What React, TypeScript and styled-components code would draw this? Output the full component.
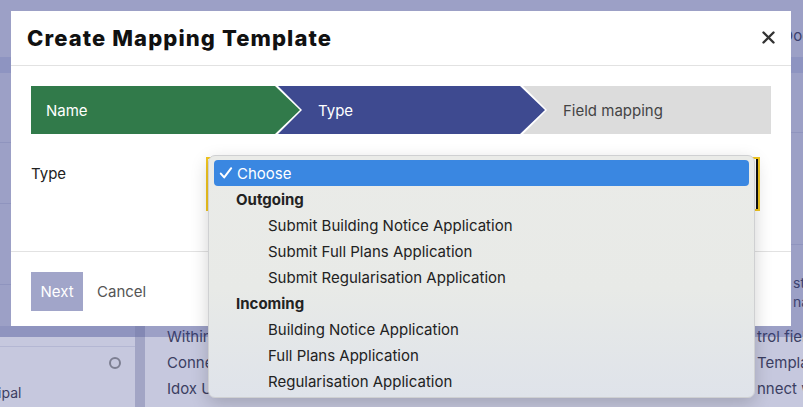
import React from 'react';
import styled, { createGlobalStyle } from 'styled-components';

const GlobalStyle = createGlobalStyle`
  html, body {
    margin: 0;
    padding: 0;
  }
  body {
    font-family: 'Inter', 'Liberation Sans', sans-serif;
    color: #222;
  }
  * {
    box-sizing: border-box;
  }
`;

type Tone = 'done' | 'current' | 'todo';

const steps: { id: string; label: string; tone: Tone; width?: number }[] = [
  { id: 'name', label: 'Name', tone: 'done', width: 269 },
  { id: 'type', label: 'Type', tone: 'current', width: 267 },
  { id: 'fields', label: 'Field mapping', tone: 'todo' },
];

const outgoing = [
  'Submit Building Notice Application',
  'Submit Full Plans Application',
  'Submit Regularisation Application',
];
const incoming = [
  'Building Notice Application',
  'Full Plans Application',
  'Regularisation Application',
];

const App: React.FC = () => (
  <Page>
    <GlobalStyle />
    {/* the app behind the modal */}
    <Shell>
      <TopNav>
        <NavLeft>Settings</NavLeft>
        <NavRight>Documents</NavRight>
      </TopNav>
      <SubBar />
      <Columns>
        <SideCol>
          <SideRow $h={70} />
          <SideRow $h={61} />
          <SideRow $h={81} />
          <SideText>
            <span>Description</span>
            <span>Classific…</span>
          </SideText>
          <Band />
          <SideRow $h={10} />
          <SideItem>
            <span>Principal</span>
            <Ring />
          </SideItem>
        </SideCol>
        <Gutter />
        <MainCol>
          <MainRow $h={60} />
          <MainRow $h={112} />
          <Para>
            <ParaLine>
              <span>Choose a template</span>
              <span>steps</span>
            </ParaLine>
            <ParaLine>
              <span>Give it a name</span>
              <span>name</span>
            </ParaLine>
          </Para>
          <BandList>
            <ListLine>
              <span>Within the</span>
              <span>trol fields</span>
            </ListLine>
            <ListLine>
              <span>Connect each</span>
              <span>Templates</span>
            </ListLine>
            <ListLine>
              <span>Idox Uniform</span>
              <span>nnect with</span>
            </ListLine>
          </BandList>
        </MainCol>
      </Columns>
    </Shell>

    <Overlay />

    <Modal>
      <ModalHeader>
        <Title>Create Mapping Template</Title>
        <CloseButton aria-label="Close">
          <svg width="13" height="13" viewBox="0 0 13 13">
            <path d="M1.5 1.5 L11.5 11.5 M11.5 1.5 L1.5 11.5" stroke="#333" strokeWidth="2.4" strokeLinecap="round" />
          </svg>
        </CloseButton>
      </ModalHeader>
      <ModalBody>
        <Stepper>
          {steps.map((s, i) => (
            <Step
              key={s.id}
              $tone={s.tone}
              $first={i === 0}
              $last={i === steps.length - 1}
              style={s.width ? { flex: `0 0 ${s.width}px` } : undefined}
            >
              {s.label}
            </Step>
          ))}
        </Stepper>
        <FieldRow>
          <FieldLabel>Type</FieldLabel>
          <SelectBox />
        </FieldRow>
      </ModalBody>
      <ModalFooter>
        <PrimaryButton>Next</PrimaryButton>
        <LinkButton>Cancel</LinkButton>
      </ModalFooter>
    </Modal>

    <Menu>
      <Option $active>
        <Check width="14" height="14" viewBox="0 0 14 14">
          <path d="M1.8 7.6 L5.2 11.4 L12.2 2.2" fill="none" stroke="#fff" strokeWidth="2" strokeLinecap="round" strokeLinejoin="round" />
        </Check>
        Choose
      </Option>
      <Group>Outgoing</Group>
      {outgoing.map((o) => (
        <Option key={o} $indent>
          {o}
        </Option>
      ))}
      <Group>Incoming</Group>
      {incoming.map((o) => (
        <Option key={o} $indent>
          {o}
        </Option>
      ))}
    </Menu>
  </Page>
);

export default App;

const Page = styled.div`
  position: relative;
  width: 803px;
  height: 407px;
  overflow: hidden;
  background: #c6c8de;
`;

const Shell = styled.div`
  display: flex;
  flex-direction: column;
  height: 100%;
  color: #3b3e62;
  font-size: 15px;
`;

const TopNav = styled.div`
  height: 57px;
  display: flex;
  align-items: center;
  padding-top: 14px;
`;

const NavLeft = styled.span`
  flex-shrink: 0;
  margin-left: -58px;
`;

const NavRight = styled.span`
  flex-shrink: 0;
  margin-left: auto;
  margin-right: -60px;
`;

const SubBar = styled.div`
  height: 16px;
  background: #b2b6d7;
`;

const Columns = styled.div`
  flex: 1;
  display: grid;
  grid-template-columns: 135px 10px 1fr;
`;

const SideCol = styled.div`
  display: flex;
  flex-direction: column;
`;

const SideRow = styled.div<{ $h: number }>`
  height: ${(p) => p.$h}px;
  border-bottom: 1px solid #b4b7d3;
`;

const SideText = styled.div`
  height: 41px;
  display: flex;
  flex-direction: column;
  justify-content: center;
  gap: 3px;
  margin-left: -78px;
  font-size: 14px;
  line-height: 18px;
`;

const Band = styled.div`
  height: 11px;
  margin-right: -10px;
  background: #b3b6d5;
`;

const SideItem = styled.div`
  flex: 1;
  display: flex;
  justify-content: space-between;
  align-items: flex-start;
  padding: 10px 14px 0 0;
  margin-left: -36px;
  font-size: 14px;
  span {
    margin-top: 27px;
  }
`;

const Ring = styled.div`
  width: 12px;
  height: 12px;
  border: 2px solid #7d7f92;
  border-radius: 50%;
`;

const Gutter = styled.div`
  background: #a2a5c5;
`;

const MainCol = styled.div`
  display: flex;
  flex-direction: column;
  padding-left: 22px;
`;

const MainRow = styled.div<{ $h: number }>`
  height: ${(p) => p.$h}px;
  border-bottom: 1px solid #b4b7d3;
  margin-left: -22px;
`;

const Para = styled.div`
  padding-top: 28px;
  display: flex;
  flex-direction: column;
  height: 81px;
`;

const ParaLine = styled.div`
  display: grid;
  grid-template-columns: 626px max-content;
  white-space: nowrap;
  font-size: 14px;
  line-height: 19px;
`;

const BandList = styled.div`
  display: flex;
  flex-direction: column;
  margin-top: -2px;
`;

const ListLine = styled.div`
  display: grid;
  grid-template-columns: 590px max-content;
  white-space: nowrap;
  line-height: 26px;
`;

const Overlay = styled.div`
  position: absolute;
  left: 0;
  top: 0;
  width: 100%;
  height: 337px;
  background: rgba(58, 68, 142, 0.3);
`;

const Modal = styled.div`
  position: absolute;
  left: 11px;
  top: 11px;
  width: 780px;
  height: 315px;
  background: #fff;
  display: flex;
  flex-direction: column;
`;

const ModalHeader = styled.div`
  height: 55px;
  border-bottom: 1px solid #e2e2e2;
  display: flex;
  align-items: center;
  justify-content: space-between;
  padding: 0 16px 0 16px;
`;

const Title = styled.h1`
  margin: 0;
  font-family: 'Inter', sans-serif;
  font-weight: 800;
  font-size: 22px;
  letter-spacing: 1.1px;
  color: #111;
`;

const CloseButton = styled.button`
  border: none;
  background: none;
  padding: 0;
  display: flex;
  margin-top: -2px;
`;

const ModalBody = styled.div`
  padding: 20px 20px 0;
  height: 186px;
  border-bottom: 1px solid #e2e2e2;
`;

const Stepper = styled.div`
  display: flex;
  height: 48px;
`;

const toneBg: Record<Tone, string> = {
  done: '#317a4a',
  current: '#3e4a90',
  todo: '#dcdcdc',
};

const Step = styled.div<{ $tone: Tone; $first: boolean; $last: boolean }>`
  flex: 1;
  display: flex;
  align-items: center;
  font-size: 15px;
  background: ${(p) => toneBg[p.$tone]};
  color: ${(p) => (p.$tone === 'todo' ? '#444' : '#fff')};
  margin-left: ${(p) => (p.$first ? '0' : '-22px')};
  padding-left: ${(p) => (p.$first ? '15px' : '40px')};
  clip-path: ${(p) =>
    p.$first
      ? 'polygon(0 0, calc(100% - 25px) 0, 100% 50%, calc(100% - 25px) 100%, 0 100%)'
      : p.$last
        ? 'polygon(0 0, 100% 0, 100% 100%, 0 100%, 24px 50%)'
        : 'polygon(0 0, calc(100% - 25px) 0, 100% 50%, calc(100% - 25px) 100%, 0 100%, 24px 50%)'};
`;

const FieldRow = styled.div`
  display: flex;
  margin-top: 23px;
  height: 54px;
`;

const FieldLabel = styled.div`
  width: 175px;
  font-size: 15px;
  padding-top: 7px;
  color: #222;
`;

const SelectBox = styled.div`
  width: 554px;
  border: 2px solid #f2c61f;
  box-shadow: inset -2px 0 0 #111;
`;

const ModalFooter = styled.div`
  flex: 1;
  display: flex;
  align-items: flex-start;
  padding: 20px 20px 0;
  gap: 14px;
`;

const PrimaryButton = styled.button`
  width: 52px;
  height: 39px;
  border: none;
  background: #a1a5c9;
  color: #fff;
  font-family: inherit;
  font-size: 15px;
  padding: 0;
`;

const LinkButton = styled.button`
  height: 39px;
  border: none;
  background: none;
  color: #555;
  font-family: inherit;
  font-size: 15px;
  padding: 0;
`;

const Menu = styled.div`
  position: absolute;
  left: 208px;
  top: 155px;
  width: 547px;
  height: 243px;
  padding: 4px 5px;
  border: 1px solid #cfd0d2;
  border-radius: 7px;
  background: linear-gradient(#eaebe8 0%, #e8eae7 55%, #dfe3ea 100%);
  box-shadow: 0 6px 18px rgba(0, 0, 0, 0.18);
  font-family: 'Inter', 'Liberation Sans', sans-serif;
  font-size: 15px;
`;

const Option = styled.div<{ $active?: boolean; $indent?: boolean }>`
  height: 26px;
  display: flex;
  align-items: center;
  border-radius: 4px;
  padding-left: ${(p) => (p.$indent ? '54px' : '5px')};
  background: ${(p) => (p.$active ? '#3a87e1' : 'transparent')};
  color: ${(p) => (p.$active ? '#fff' : '#222')};
`;

const Check = styled.svg`
  margin-right: 4px;
`;

const Group = styled.div`
  height: 26px;
  display: flex;
  align-items: center;
  padding-left: 22px;
  font-weight: 700;
  color: #222;
`;
